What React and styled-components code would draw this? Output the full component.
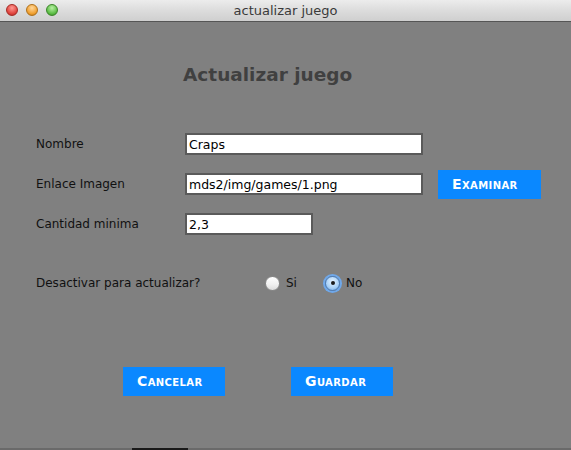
import React, { useState } from "react";
import styled, { createGlobalStyle } from "styled-components";

const GlobalStyle = createGlobalStyle`
  html, body {
    margin: 0;
    padding: 0;
    background: #808080;
  }
  body {
    font-family: "DejaVu Sans", "Liberation Sans", sans-serif;
    overflow: hidden;
  }
`;

function App() {
  const [desactivar, setDesactivar] = useState("no");
  const [nombre, setNombre] = useState("Craps");
  const [enlace, setEnlace] = useState("mds2/img/games/1.png");
  const [cantidad, setCantidad] = useState("2,3");

  return (
    <Window>
      <GlobalStyle />
      <TitleBar>
        <Lights>
          <Light color="red" />
          <Light color="orange" />
          <Light color="green" />
        </Lights>
        <WindowTitle>actualizar juego</WindowTitle>
      </TitleBar>
      <Content>
        <Heading>Actualizar juego</Heading>
        <Form>
          <Label>Nombre</Label>
          <Input
            width="238px"
            value={nombre}
            onChange={(e) => setNombre(e.target.value)}
          />
          <span />
          <Label>Enlace Imagen</Label>
          <Input
            width="238px"
            value={enlace}
            onChange={(e) => setEnlace(e.target.value)}
          />
          <BlueButton width="103px" offset="15px">
            Examinar
          </BlueButton>
          <Label>Cantidad minima</Label>
          <Input
            width="128px"
            value={cantidad}
            onChange={(e) => setCantidad(e.target.value)}
          />
          <span />
        </Form>
        <RadioRow>
          <RadioLabel>Desactivar para actualizar?</RadioLabel>
          <RadioOption onClick={() => setDesactivar("si")}>
            <Radio checked={desactivar === "si"} />
            <span>Si</span>
          </RadioOption>
          <RadioOption onClick={() => setDesactivar("no")}>
            <Radio checked={desactivar === "no"} />
            <span>No</span>
          </RadioOption>
        </RadioRow>
        <Actions>
          <BlueButton width="102px">Cancelar</BlueButton>
          <BlueButton width="102px">Guardar</BlueButton>
        </Actions>
      </Content>
      <BottomEdge>
        <DockMark />
      </BottomEdge>
    </Window>
  );
}

export default App;

const Window = styled.div`
  width: 571px;
  height: 450px;
  display: flex;
  flex-direction: column;
  background: #808080;
`;

const TitleBar = styled.div`
  height: 21px;
  flex-shrink: 0;
  display: flex;
  align-items: center;
  justify-content: center;
  position: relative;
  background: linear-gradient(180deg, #ececec 0%, #dcdcdc 50%, #cfcfcf 100%);
  border-bottom: 1px solid #555;
`;

const Lights = styled.div`
  position: absolute;
  left: 6px;
  top: 4px;
  display: flex;
  gap: 8px;
`;

const lightColors = {
  red: ["#ff9a93", "#e0443e", "#a52a24"],
  orange: ["#ffd79a", "#f0a030", "#b07018"],
  green: ["#b8f0a4", "#5cbd45", "#3a8528"],
};

const Light = styled.div`
  width: 12px;
  height: 12px;
  border-radius: 50%;
  box-sizing: border-box;
  border: 1px solid ${(p) => lightColors[p.color][2]};
  background: radial-gradient(
    circle at 50% 30%,
    ${(p) => lightColors[p.color][0]} 0%,
    ${(p) => lightColors[p.color][1]} 65%,
    ${(p) => lightColors[p.color][2]} 100%
  );
`;

const WindowTitle = styled.div`
  font-size: 13px;
  color: #3a3a3a;
`;

const Content = styled.div`
  flex: 1;
  display: flex;
  flex-direction: column;
`;

const Heading = styled.h1`
  margin: 41px 0 0 183px;
  font-size: 18.5px;
  line-height: 24px;
  font-weight: bold;
  color: #404040;
`;

const Form = styled.div`
  margin: 37px 0 0 36px;
  display: grid;
  grid-template-columns: 149px 238px auto;
  grid-auto-rows: 40px;
  align-items: center;
`;

const Label = styled.span`
  font-size: 12px;
  color: #111;
`;

const RadioLabel = styled(Label)`
  width: 229px;
`;

const Input = styled.input`
  box-sizing: border-box;
  width: ${(p) => p.width};
  height: 22px;
  border: 2px solid #5a5a5a;
  background: #fff;
  padding: 0 2px;
  font-family: "DejaVu Sans", "Liberation Sans", sans-serif;
  font-size: 12.5px;
  color: #000;
  outline: none;
`;

const BlueButton = styled.button`
  box-sizing: border-box;
  width: ${(p) => p.width};
  height: 29px;
  margin-left: ${(p) => p.offset || "0"};
  border: none;
  background: #0a88ff;
  color: #fff;
  font-family: "DejaVu Sans", "Liberation Sans", sans-serif;
  font-size: 14px;
  font-weight: bold;
  font-variant: small-caps;
  letter-spacing: 0.4px;
  text-align: left;
  padding: 0 0 1px 14px;
  cursor: pointer;
`;

const RadioRow = styled.div`
  margin: 27px 0 0 36px;
  height: 24px;
  display: flex;
  align-items: center;
`;

const RadioOption = styled.label`
  width: 60px;
  display: flex;
  align-items: center;
  gap: 6px;
  font-size: 12px;
  color: #111;
  cursor: pointer;
`;

const Radio = styled.span`
  box-sizing: border-box;
  width: 15px;
  height: 15px;
  border-radius: 50%;
  position: relative;
  border: 1px solid ${(p) => (p.checked ? "#4a7fc0" : "#8a8a8a")};
  background: ${(p) =>
    p.checked
      ? "radial-gradient(circle at 50% 35%, #e4f2ff 0%, #a8d0f6 60%, #6aa4e0 100%)"
      : "linear-gradient(180deg, #ffffff 0%, #f0f0f0 60%, #dcdcdc 100%)"};
  box-shadow: ${(p) => (p.checked ? "0 0 0 2px #6fa8ea" : "none")};
  &::after {
    content: "";
    display: ${(p) => (p.checked ? "block" : "none")};
    position: absolute;
    left: 4.5px;
    top: 4.5px;
    width: 4px;
    height: 4px;
    border-radius: 50%;
    background: #1a1a1a;
  }
`;

const Actions = styled.div`
  margin: 72px 0 0 123px;
  display: flex;
  gap: 66px;
`;

const BottomEdge = styled.div`
  height: 2px;
  flex-shrink: 0;
  background: #6a6a6a;
  display: flex;
`;

const DockMark = styled.div`
  margin-left: 132px;
  width: 56px;
  background: #1a1a1a;
`;
